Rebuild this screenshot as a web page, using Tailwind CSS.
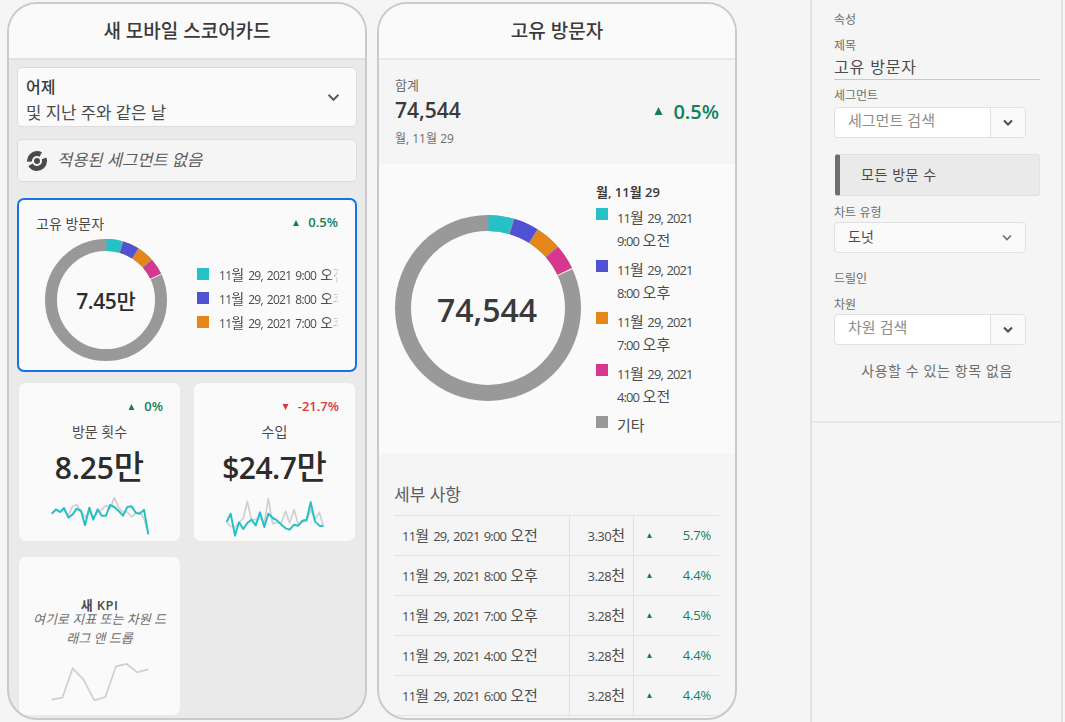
<!DOCTYPE html>
<html lang="ko">
<head>
    <meta charset="UTF-8">
    <title>새 모바일 스코어카드</title>
    <script src="https://cdn.jsdelivr.net/npm/@tailwindcss/browser@4"></script>
</head>
<body class="bg-[#f5f5f5] font-['Open_Sans','Noto_Sans_CJK_KR',sans-serif] text-[#4b4b4b] overflow-hidden">
<div class="flex w-[1065px] h-[722px] overflow-hidden">

    <!-- Scorecard phone -->
    <section class="ml-[7px] mt-[2px] w-[360px] h-[718px] shrink-0 flex flex-col border-2 border-[#cacaca] rounded-[30px] overflow-hidden bg-[#eaeaea]">
        <header class="h-[56px] shrink-0 flex items-center justify-center bg-[#fafafa] border-b-2 border-[#e1e1e1] text-[19px] font-medium text-[#3a3a3a]">새 모바일 스코어카드</header>
        <div class="flex-1 px-[8px] pt-[7px]">
            <div class="h-[60px] flex items-center justify-between pl-2 pr-4 bg-[#fafafa] border border-[#dcdcdc] rounded-[5px] overflow-hidden">
                <div class="leading-[25px] pt-[6px]">
                    <div class="text-[16px] font-medium text-[#3a3a3a]">어제</div>
                    <div class="text-[16.7px] text-[#4b4b4b]">및 지난 주와 같은 날</div>
                </div>
                <svg class="w-[13px] h-[9px] text-[#5c5c5c]" viewBox="0 0 14 10" fill="none" stroke="currentColor" stroke-width="2.2"><path d="M1.5 2 7 7.5 12.5 2"/></svg>
            </div>
            <div class="mt-3 h-[43px] flex items-center pl-[9px] gap-[10px] bg-[#f5f5f5] border border-[#dcdcdc] rounded-[5px]">
                <svg class="w-[20px] h-[20px]" viewBox="0 0 20 20"><circle cx="10" cy="10" r="7.5" fill="none" stroke="#4b4b4b" stroke-width="5" pathLength="360" stroke-dasharray="150 25 125 40 20 0"/><circle cx="10" cy="10" r="3" fill="#4b4b4b"/></svg>
                <span class="text-[16.5px] italic text-[#5c5c5c]">적용된 세그먼트 없음</span>
            </div>

            <!-- Selected card -->
            <div class="mt-[16px] h-[174px] flex flex-col bg-[#fafafa] border-2 border-[#1473e6] rounded-[7px] pl-[17px] pr-[16px] pt-[14px]">
                <div class="flex items-center justify-between h-[18px] pr-[1px]">
                    <span class="text-[14px] text-[#4b4b4b]">고유 방문자</span>
                    <span class="flex items-center gap-[9px] text-[13px] font-semibold text-[#12805c]">
                        <svg class="w-[6px] h-[6px]" viewBox="0 0 6 6" fill="currentColor"><path d="M3 0 6 6H0Z"/></svg>0.5%
                    </span>
                </div>
                <div class="flex items-start mt-[7px]">
                    <div class="relative ml-[9px] w-[122px] h-[122px] shrink-0">
                        <svg class="w-full h-full -rotate-90" viewBox="0 0 122 122" fill="none" stroke-width="12">
                            <circle cx="61" cy="61" r="55" stroke="#999999"/>
                            <circle cx="61" cy="61" r="55" stroke="#26c0c7" pathLength="360" stroke-dasharray="15.4 344.6" stroke-dashoffset="-0.4"/>
                            <circle cx="61" cy="61" r="55" stroke="#5151d3" pathLength="360" stroke-dasharray="15.4 344.6" stroke-dashoffset="-16.6"/>
                            <circle cx="61" cy="61" r="55" stroke="#e68619" pathLength="360" stroke-dasharray="15.4 344.6" stroke-dashoffset="-32.8"/>
                            <circle cx="61" cy="61" r="55" stroke="#d83790" pathLength="360" stroke-dasharray="15.4 344.6" stroke-dashoffset="-49"/>
                            <circle cx="61" cy="61" r="55" stroke="#fafafa" pathLength="360" stroke-dasharray="0.8 359.2" stroke-dashoffset="-64.4"/>
                        </svg>
                        <div class="absolute inset-0 flex items-center justify-center text-[21px] font-semibold text-[#2c2c2c] pt-[3px] tracking-[-0.4px]">7.45<span class="font-medium text-[21px] tracking-normal">만</span></div>
                    </div>
                    <ul class="ml-[30px] mt-[23px] flex-1 min-w-0 overflow-hidden whitespace-nowrap text-[12px] tracking-[-0.7px] [word-spacing:1.5px] text-[#4b4b4b] [mask-image:linear-gradient(to_right,black_92%,transparent)]">
                        <li class="h-6 flex items-center"><span class="w-3 h-3 shrink-0 mr-[10px] bg-[#26c0c7]"></span><span>11<span class="text-[14px] tracking-normal">월</span> 29, 2021 9:00 <span class="text-[14px] tracking-normal">오전</span></span></li>
                        <li class="h-6 flex items-center"><span class="w-3 h-3 shrink-0 mr-[10px] bg-[#5151d3]"></span><span>11<span class="text-[14px] tracking-normal">월</span> 29, 2021 8:00 <span class="text-[14px] tracking-normal">오후</span></span></li>
                        <li class="h-6 flex items-center"><span class="w-3 h-3 shrink-0 mr-[10px] bg-[#e68619]"></span><span>11<span class="text-[14px] tracking-normal">월</span> 29, 2021 7:00 <span class="text-[14px] tracking-normal">오후</span></span></li>
                    </ul>
                </div>
            </div>

            <!-- KPI cards -->
            <div class="mt-[11px] ml-[2px] grid grid-cols-[161px_161px] gap-x-[14px] gap-y-[16px]">
                <div class="h-[158px] flex flex-col items-center bg-[#fafafa] rounded-[7px] relative">
                    <span class="absolute top-[14px] right-[17px] flex items-center gap-[9px] text-[13px] font-semibold text-[#12805c]">
                        <svg class="w-[7px] h-[6px]" viewBox="0 0 6 6" fill="currentColor"><path d="M3 0 6 6H0Z"/></svg>0%
                    </span>
                    <div class="mt-[39px] text-[14px] leading-5 text-[#4b4b4b]">방문 횟수</div>
                    <div class="mt-[5px] text-[30px] leading-[40px] font-semibold text-[#2c2c2c] tracking-[-0.2px]">8.25<span class="text-[33px] font-medium tracking-normal">만</span></div>
                    <svg class="mt-[9px] w-[100px] h-[40px]" viewBox="150 360 300 120" fill="none" stroke-linejoin="round">
                        <polyline stroke="#cfcfcf" stroke-width="5" points="155,410 168,400 180,405 192,400 205,415 218,388 230,383 243,402 255,420 268,405 280,420 293,405 305,398 318,385 330,395 343,362 356,392 369,405 382,405 395,420 408,408 420,405 432,425 445,470"/>
                        <polyline stroke="#26c0c7" stroke-width="6" points="155,410 168,397 180,405 192,393 205,422 218,412 230,395 243,402 255,445 268,392 280,428 293,397 305,416 318,416 330,384 343,390 356,402 369,416 382,390 395,388 408,408 420,410 432,398 445,472"/>
                    </svg>
                </div>
                <div class="h-[158px] flex flex-col items-center bg-[#fafafa] rounded-[7px] relative">
                    <span class="absolute top-[14px] right-[16px] flex items-center gap-[9px] text-[13px] font-semibold text-[#d7373f]">
                        <svg class="w-[7px] h-[6px]" viewBox="0 0 6 6" fill="currentColor"><path d="M0 0H6L3 6Z"/></svg>-21.7%
                    </span>
                    <div class="mt-[39px] text-[14px] leading-5 text-[#4b4b4b]">수입</div>
                    <div class="mt-[5px] text-[30px] leading-[40px] font-semibold text-[#2c2c2c] tracking-[-0.5px]">$24.7<span class="text-[33px] font-medium tracking-normal">만</span></div>
                    <svg class="mt-[9px] w-[100px] h-[40px]" viewBox="673 362 300 120" fill="none" stroke-linejoin="round">
                        <polyline stroke="#cfcfcf" stroke-width="5" points="678,437 690,450 703,452 715,440 728,425 740,375 752,430 765,430 778,425 791,440 803,367 816,442 829,438 842,440 855,405 867,440 880,400 893,445 905,437 918,435 930,400 943,430 956,408 968,450"/>
                        <polyline stroke="#26c0c7" stroke-width="6" points="678,437 690,412 703,478 715,438 728,458 740,440 752,430 765,447 778,408 791,452 803,412 816,425 829,432 842,445 855,456 867,460 880,445 893,448 905,433 918,430 930,378 943,435 956,448 968,450"/>
                    </svg>
                </div>
                <div class="h-[158px] flex flex-col items-center bg-[#fafafa] rounded-[7px] text-center">
                    <div class="mt-[41px] text-[13px] leading-[14px] font-semibold text-[#4b4b4b] tracking-[0.4px]">새 KPI</div>
                    <div class="-mt-[2px] w-[140px] text-[13px] leading-[19px] italic text-[#6e6e6e]">여기로 지표 또는 차원 드래그 앤 드롭</div>
                    <svg class="mt-[13px] w-[100px] h-[40px]" viewBox="150 860 300 120" fill="none" stroke="#cfcfcf" stroke-width="5"><polyline points="155,976 187,970 218,882 250,915 283,978 316,968 348,876 380,869 412,894 445,885"/></svg>
                </div>
            </div>
        </div>
    </section>

    <!-- Detail phone -->
    <section class="ml-[10px] mt-[2px] w-[360px] h-[718px] shrink-0 flex flex-col border-2 border-[#cacaca] rounded-[30px] overflow-hidden bg-[#f5f5f5]">
        <header class="h-[56px] shrink-0 flex items-center justify-center bg-[#fafafa] border-b-2 border-[#e8e8e8] text-[19px] font-medium text-[#3a3a3a]">고유 방문자</header>
        <div class="h-[104px] shrink-0 flex items-start justify-between pl-[16px] pr-[16px] pt-[15px]">
            <div>
                <div class="text-[13px] leading-[20px] text-[#6e6e6e]">합계</div>
                <div class="mt-[1px] text-[21px] leading-[28px] font-semibold text-[#3a3a3a]">74,544</div>
                <div class="mt-[5px] text-[12px] leading-[20px] text-[#6e6e6e]">월, 11월 29</div>
            </div>
            <div class="self-center -mt-[15px] flex items-center gap-[10px] text-[20px] font-semibold text-[#12805c]">
                <svg class="w-[9px] h-[8px] mb-[3px]" viewBox="0 0 6 6" fill="currentColor"><path d="M3 0 6 6H0Z"/></svg>0.5%
            </div>
        </div>
        <div class="h-[289px] shrink-0 flex bg-[#fafafa]">
            <div class="relative mt-[51px] ml-[16px] w-[186px] h-[186px] shrink-0">
                <svg class="w-full h-full -rotate-90" viewBox="0 0 186 186" fill="none" stroke-width="16">
                    <circle cx="93" cy="93" r="85" stroke="#999999"/>
                    <circle cx="93" cy="93" r="85" stroke="#26c0c7" pathLength="360" stroke-dasharray="15.6 344.4" stroke-dashoffset="-0.3"/>
                    <circle cx="93" cy="93" r="85" stroke="#5151d3" pathLength="360" stroke-dasharray="15.6 344.4" stroke-dashoffset="-16.5"/>
                    <circle cx="93" cy="93" r="85" stroke="#e68619" pathLength="360" stroke-dasharray="15.6 344.4" stroke-dashoffset="-32.7"/>
                    <circle cx="93" cy="93" r="85" stroke="#d83790" pathLength="360" stroke-dasharray="15.6 344.4" stroke-dashoffset="-48.9"/>
                    <circle cx="93" cy="93" r="85" stroke="#fafafa" pathLength="360" stroke-dasharray="0.6 359.4" stroke-dashoffset="-64.5"/>
                </svg>
                <div class="absolute inset-0 flex items-center justify-center text-[32px] font-semibold text-[#3a3a3a] pt-[3px] pr-[2px]">74,544</div>
            </div>
            <div class="ml-[15px] pt-[18px]">
                <div class="text-[13px] leading-[20px] font-semibold text-[#3a3a3a]">월, 11월 29</div>
                <ul class="mt-[4px] text-[13px] leading-[22px] tracking-[-0.9px] [word-spacing:1px] text-[#4b4b4b]">
                    <li class="flex h-[52px]"><span class="w-3 h-3 mt-[2px] mr-[9px] bg-[#26c0c7]"></span><span>11<span class="text-[15px] tracking-normal">월</span> 29, 2021<br>9:00 <span class="text-[15px] tracking-normal">오전</span></span></li>
                    <li class="flex h-[52px]"><span class="w-3 h-3 mt-[2px] mr-[9px] bg-[#5151d3]"></span><span>11<span class="text-[15px] tracking-normal">월</span> 29, 2021<br>8:00 <span class="text-[15px] tracking-normal">오후</span></span></li>
                    <li class="flex h-[52px]"><span class="w-3 h-3 mt-[2px] mr-[9px] bg-[#e68619]"></span><span>11<span class="text-[15px] tracking-normal">월</span> 29, 2021<br>7:00 <span class="text-[15px] tracking-normal">오후</span></span></li>
                    <li class="flex h-[52px]"><span class="w-3 h-3 mt-[2px] mr-[9px] bg-[#d83790]"></span><span>11<span class="text-[15px] tracking-normal">월</span> 29, 2021<br>4:00 <span class="text-[15px] tracking-normal">오전</span></span></li>
                    <li class="flex"><span class="w-3 h-3 mt-[2px] mr-[9px] bg-[#999999]"></span><span class="text-[15px] tracking-normal">기타</span></li>
                </ul>
            </div>
        </div>
        <div class="flex-1 px-[15px]">
            <div class="mt-[30px] text-[17px] leading-[24px] text-[#5c5c5c]">세부 사항</div>
            <div class="mt-[8px] w-[325px] border-t border-[#e1e1e1] text-[13px] text-[#4b4b4b]">
                <div class="grid grid-cols-[176px_64px_1fr] h-10 items-stretch border-b border-[#e1e1e1]">
                    <div class="flex items-center pl-2 border-r border-[#e1e1e1] tracking-[-0.8px] [word-spacing:1.5px]"><span>11<span class="text-[15px] tracking-normal">월</span> 29, 2021 9:00 <span class="text-[15px] tracking-normal">오전</span></span></div>
                    <div class="flex items-center justify-end pr-[8px] border-r border-[#e1e1e1] tracking-[-0.5px]"><span>3.30<span class="text-[15px] tracking-normal">천</span></span></div>
                    <div class="flex items-center justify-between pl-[13px] pr-[8px] tracking-[-0.2px] text-[#12805c]"><svg class="w-[5px] h-[5px]" viewBox="0 0 6 6" fill="currentColor"><path d="M3 0 6 6H0Z"/></svg>5.7%</div>
                </div>
                <div class="grid grid-cols-[176px_64px_1fr] h-10 items-stretch border-b border-[#e1e1e1]">
                    <div class="flex items-center pl-2 border-r border-[#e1e1e1] tracking-[-0.8px] [word-spacing:1.5px]"><span>11<span class="text-[15px] tracking-normal">월</span> 29, 2021 8:00 <span class="text-[15px] tracking-normal">오후</span></span></div>
                    <div class="flex items-center justify-end pr-[8px] border-r border-[#e1e1e1] tracking-[-0.5px]"><span>3.28<span class="text-[15px] tracking-normal">천</span></span></div>
                    <div class="flex items-center justify-between pl-[13px] pr-[8px] tracking-[-0.2px] text-[#12805c]"><svg class="w-[5px] h-[5px]" viewBox="0 0 6 6" fill="currentColor"><path d="M3 0 6 6H0Z"/></svg>4.4%</div>
                </div>
                <div class="grid grid-cols-[176px_64px_1fr] h-10 items-stretch border-b border-[#e1e1e1]">
                    <div class="flex items-center pl-2 border-r border-[#e1e1e1] tracking-[-0.8px] [word-spacing:1.5px]"><span>11<span class="text-[15px] tracking-normal">월</span> 29, 2021 7:00 <span class="text-[15px] tracking-normal">오후</span></span></div>
                    <div class="flex items-center justify-end pr-[8px] border-r border-[#e1e1e1] tracking-[-0.5px]"><span>3.28<span class="text-[15px] tracking-normal">천</span></span></div>
                    <div class="flex items-center justify-between pl-[13px] pr-[8px] tracking-[-0.2px] text-[#12805c]"><svg class="w-[5px] h-[5px]" viewBox="0 0 6 6" fill="currentColor"><path d="M3 0 6 6H0Z"/></svg>4.5%</div>
                </div>
                <div class="grid grid-cols-[176px_64px_1fr] h-10 items-stretch border-b border-[#e1e1e1]">
                    <div class="flex items-center pl-2 border-r border-[#e1e1e1] tracking-[-0.8px] [word-spacing:1.5px]"><span>11<span class="text-[15px] tracking-normal">월</span> 29, 2021 4:00 <span class="text-[15px] tracking-normal">오전</span></span></div>
                    <div class="flex items-center justify-end pr-[8px] border-r border-[#e1e1e1] tracking-[-0.5px]"><span>3.28<span class="text-[15px] tracking-normal">천</span></span></div>
                    <div class="flex items-center justify-between pl-[13px] pr-[8px] tracking-[-0.2px] text-[#12805c]"><svg class="w-[5px] h-[5px]" viewBox="0 0 6 6" fill="currentColor"><path d="M3 0 6 6H0Z"/></svg>4.4%</div>
                </div>
                <div class="grid grid-cols-[176px_64px_1fr] h-10 items-stretch border-b border-[#e1e1e1]">
                    <div class="flex items-center pl-2 border-r border-[#e1e1e1] tracking-[-0.8px] [word-spacing:1.5px]"><span>11<span class="text-[15px] tracking-normal">월</span> 29, 2021 6:00 <span class="text-[15px] tracking-normal">오전</span></span></div>
                    <div class="flex items-center justify-end pr-[8px] border-r border-[#e1e1e1] tracking-[-0.5px]"><span>3.28<span class="text-[15px] tracking-normal">천</span></span></div>
                    <div class="flex items-center justify-between pl-[13px] pr-[8px] tracking-[-0.2px] text-[#12805c]"><svg class="w-[5px] h-[5px]" viewBox="0 0 6 6" fill="currentColor"><path d="M3 0 6 6H0Z"/></svg>4.4%</div>
                </div>
            </div>
        </div>
    </section>

    <!-- Properties rail -->
    <aside class="ml-[73px] w-[253px] h-[722px] shrink-0 flex flex-col border-x-2 border-[#e1e1e1] font-['Liberation_Sans','Noto_Sans_CJK_KR',sans-serif] text-[12px] text-[#6e6e6e]">
        <div class="h-[423px] shrink-0 border-b-2 border-[#e8e8e8] pl-[22px] pr-[21px] pt-[12px]">
            <div class="leading-4">속성</div>
            <div class="mt-[10px] leading-4">제목</div>
            <div class="h-[26px] flex items-end pb-[1px] border-b border-[#c8c8c8] text-[16px] leading-[20px] text-[#4b4b4b] tracking-[0.8px]">고유 방문자</div>
            <div class="mt-[8px] leading-4">세그먼트</div>
            <div class="mt-[3px] w-[192px] h-[31px] flex bg-white border border-[#e1e1e1] rounded-[4px] text-[15px] leading-[25px] text-[#8e8e8e]">
                <div class="flex-1 pl-[13px]">세그먼트 검색</div>
                <div class="w-[35px] flex items-center justify-center bg-[#fafafa] border-l border-[#e1e1e1] rounded-r-[4px]">
                    <svg class="w-[10px] h-[7px] text-[#4b4b4b]" viewBox="0 0 10 7" fill="none" stroke="currentColor" stroke-width="2"><path d="M1 1.5 5 5.5 9 1.5"/></svg>
                </div>
            </div>
            <div class="mt-[16px] ml-[1px] h-[42px] flex items-center bg-[#eaeaea] border border-[#e1e1e1] border-l-[5px] border-l-[#6e6e6e] rounded-[3px] pl-[21px] text-[14px] text-[#4b4b4b] tracking-[0.5px]">모든 방문 수</div>
            <div class="mt-[9px] leading-4">차트 유형</div>
            <div class="mt-[1px] w-[192px] h-[31px] flex items-center justify-between bg-[#fafafa] border border-[#e1e1e1] rounded-[4px] pl-[13px] pr-[13px] text-[14px] text-[#4b4b4b]">
                <span>도넛</span>
                <svg class="w-[10px] h-[7px] text-[#6e6e6e]" viewBox="0 0 10 7" fill="none" stroke="currentColor" stroke-width="1.6"><path d="M1 1.5 5 5.5 9 1.5"/></svg>
            </div>
            <div class="mt-[18px] leading-4">드릴인</div>
            <div class="mt-[10px] leading-4">차원</div>
            <div class="mt-[1px] w-[192px] h-[31px] flex bg-white border border-[#e1e1e1] rounded-[4px] text-[15px] leading-[25px] text-[#8e8e8e]">
                <div class="flex-1 pl-[13px]">차원 검색</div>
                <div class="w-[35px] flex items-center justify-center bg-[#fafafa] border-l border-[#e1e1e1] rounded-r-[4px]">
                    <svg class="w-[10px] h-[7px] text-[#4b4b4b]" viewBox="0 0 10 7" fill="none" stroke="currentColor" stroke-width="2"><path d="M1 1.5 5 5.5 9 1.5"/></svg>
                </div>
            </div>
            <div class="mt-[17px] text-center text-[14px] leading-[18px] text-[#6e6e6e] tracking-[0.5px]">사용할 수 있는 항목 없음</div>
        </div>
    </aside>
</div>
</body>
</html>
